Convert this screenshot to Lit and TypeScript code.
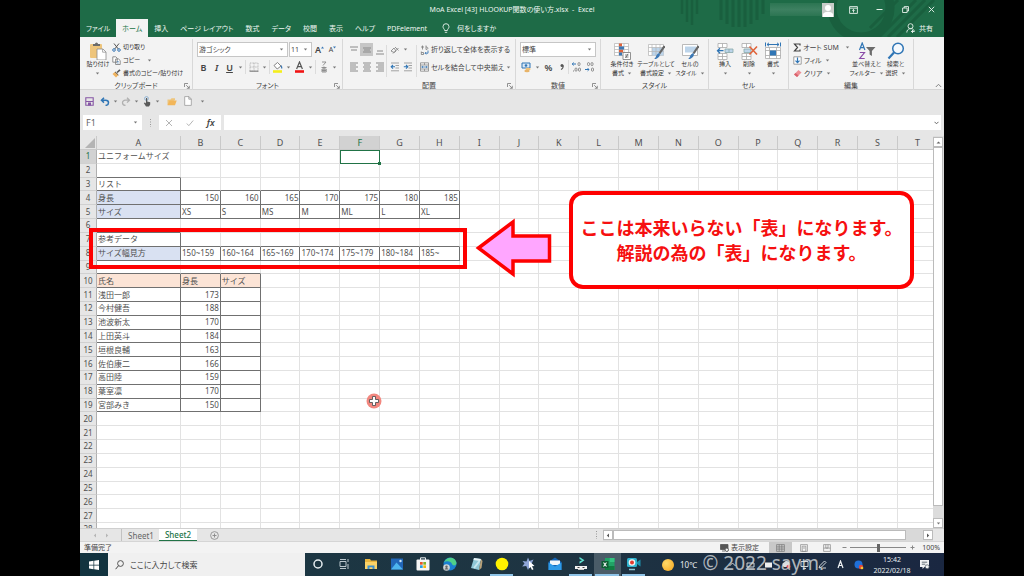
import { LitElement, html, css, svg, nothing } from "lit";
import { customElement, state } from "lit/decorators.js";
import { classMap } from "lit/directives/class-map.js";

const pic = (w: number, h: number, body: unknown) =>
  html`<svg class="pic" width=${w} height=${h} viewBox="0 0 ${w} ${h}" fill="none" aria-hidden="true">${body}</svg>`;

const caret = () => pic(5, 3, svg`<path d="M0.8 0.4 H4.2 L2.5 2.4Z" fill="#777"/>`);

const lines = (rows: number[][]) =>
  pic(10, 10, rows.map(([x, y, w]) => svg`<path d="M${x} ${y}h${w}" stroke="#8a8a8a" stroke-width="1"/>`));

const I = {
  paste: pic(18, 18, svg`<rect x="1" y="2" width="12" height="14" rx="1" fill="#eec57c"/><path d="M4 4V2h2a1.5 1.5 0 0 1 3 0h2v2z" fill="#6b6b6b"/><path d="M8 7h6l3 3v8H8z" fill="#fff" stroke="#8a8a8a" stroke-width=".8"/><path d="M13.6 7v3.2H17" stroke="#8a8a8a" stroke-width=".7"/>`),
  cut: pic(9, 9, svg`<path d="M2 .5 6.3 6M7 .5 2.7 6" stroke="#555" stroke-width="1"/><circle cx="2" cy="7" r="1.3" stroke="#3b78b5"/><circle cx="7" cy="7" r="1.3" stroke="#3b78b5"/>`),
  copy: pic(9, 9, svg`<path d="M.8.8h3l1.400 1.400v4H.8zM3.600 3h3L8.200 4.500v4H3.600z" fill="#fff" stroke="#777" stroke-width=".8"/><path d="M4.800 5.500h2M4.800 7h2" stroke="#3b78b5" stroke-width=".6"/>`),
  brush: pic(9, 9, svg`<path d="M5 3.500 8 .8" stroke="#555" stroke-width="1.600"/><path d="M3 2.800 6.400 6 4 8.500.500 5z" fill="#efb35f"/><path d="m3 2.800 3.400 3.200" stroke="#555" stroke-width="1"/>`),
  launch: pic(6, 6, svg`<path d="M.5 4V.5H4M2.200 2.200l3 3M5.300 2.800v2.500H2.800" stroke="#777" stroke-width=".8"/>`),
  border: pic(10, 10, svg`<path d="M1 1h8v8H1zM5 1v8M1 5h8" stroke="#aaa" stroke-width=".8" stroke-dasharray="1 .6"/><path d="M.5 9.200h9" stroke="#777"/>`),
  fill: pic(11, 12, svg`<path d="m2 4.500 3.500-3L9 5 5.200 8z" fill="#fff" stroke="#777" stroke-width=".9"/><path d="M9 4.500c1 1.500 1 2 .6 3" stroke="#3b78b5" stroke-width="1.300"/><path d="M1 10.500h9" stroke="#f4ee1c" stroke-width="2.600"/>`),
  fontc: pic(11, 12, svg`<path d="m2.600 8 2.900-7 2.900 7M3.600 5.700h3.800" stroke="#555" stroke-width="1.200"/><path d="M1 10.500h9" stroke="#f01414" stroke-width="2.600"/>`),
  phon: pic(8, 12, svg`<path d="M2 1h4L3 4.500M1.500 6.500h5M4 5.500V11M2 8h4.200v3H2zM2 9.500h4" stroke="#888" stroke-width=".9"/>`),
  top: lines([[1, 2, 8], [2, 5, 6]]),
  mid: lines([[1, 3, 8], [2, 5, 6], [1, 7, 8]]),
  bot: lines([[2, 6, 6], [1, 9, 8]]),
  left: lines([[1, 1, 8], [1, 3, 6], [1, 5, 8], [1, 7, 6], [1, 9, 8]]),
  cen: lines([[1, 1, 8], [2, 3, 6], [1, 5, 8], [2, 7, 6], [1, 9, 8]]),
  right: lines([[1, 1, 8], [3, 3, 6], [1, 5, 8], [3, 7, 6], [1, 9, 8]]),
  orient: pic(10, 10, svg`<path d="m1 6 3-3 2 3-2 1.500zM5 2l3.500 3.500M3 8.500 8.500 3" stroke="#888" stroke-width=".9"/>`),
  outd: pic(10, 10, svg`<path d="M1 1h8M5.500 3.500H9M5.500 6H9M1 8.800h8" stroke="#999" stroke-width=".9"/><path d="M5 4.800H1.200M3 3 1.200 4.800 3 6.600" stroke="#2f75b5" stroke-width="1.100"/>`),
  ind: pic(10, 10, svg`<path d="M1 1h8M5.500 3.500H9M5.500 6H9M1 8.800h8" stroke="#999" stroke-width=".9"/><path d="M.8 4.800h3.800M3 3l1.800 1.800L3 6.600" stroke="#2f75b5" stroke-width="1.100"/>`),
  wrap: pic(9, 10, svg`<path d="M1 2h3M2.500.5v4M6 .5v4c2.500 0 2.500-2.600 0-2.500M1.300 6.500v3h2.200v-2H1.400" stroke="#777" stroke-width=".8"/><path d="M8 5.500v2.700H5M6.200 7 5 8.200l1.200 1.200" stroke="#3b78b5" stroke-width=".9"/>`),
  merge: pic(9, 10, svg`<path d="M.5.8h8v8.400h-8zM.5 3h8M.5 7h8M4.500.8V3M4.500 7v2" stroke="#888" stroke-width=".8"/><path d="M1.500 5h6M3 4 1.800 5 3 6M6 4l1.200 1L6 6" stroke="#3b78b5" stroke-width=".8"/>`),
  money: pic(11, 11, svg`<path d="M1 1h8v5H1z" fill="#dbe8f5" stroke="#2f75b5"/><circle cx="5" cy="3.500" r="1.300" fill="#2f75b5"/><ellipse cx="7" cy="7" rx="2.700" ry="1.300" fill="#f0c27a"/><ellipse cx="6" cy="9" rx="2.700" ry="1.300" fill="#e8b469"/>`),
  comma: pic(8, 10, svg`<circle cx="4" cy="3.500" r="1.500" fill="#555"/><path d="M5.200 3.500C5.300 5.500 4.500 6.800 3 7.500" stroke="#555" stroke-width="1.100"/>`),
  decUp: pic(11, 10, svg`<path d="M5 2H1.200M2.700.6 1.200 2l1.500 1.400" stroke="#2f75b5"/><rect x="7" y=".6" width="2" height="3" rx="1" stroke="#777" stroke-width=".8"/><rect x="4" y="6" width="2" height="3.200" rx="1" stroke="#777" stroke-width=".8"/><rect x="7.500" y="6" width="2" height="3.200" rx="1" stroke="#777" stroke-width=".8"/><path d="M2 9h.9" stroke="#777"/>`),
  decDn: pic(11, 10, svg`<rect x="3.500" y=".6" width="2" height="3" rx="1" stroke="#777" stroke-width=".8"/><rect x="7" y=".6" width="2" height="3" rx="1" stroke="#777" stroke-width=".8"/><path d="M1 7.500h4M3.600 6.100 5 7.500 3.600 8.900" stroke="#2f75b5"/><rect x="7.500" y="6" width="2" height="3.200" rx="1" stroke="#777" stroke-width=".8"/>`),
  cond: pic(18, 18, svg`<path d="M1.500 1.500h14v12h-14zM6 1.500v12M11 1.500v12M1.500 4.500h14M1.500 7.500h14M1.500 10.500h14" fill="#fff" stroke="#bbb" stroke-width=".8"/><path d="M6 1.500h3v3H6zM6 7.500h4v3H6z" fill="#e0633a"/><path d="M6 4.500h5v3H6zM6 10.500h3v3H6z" fill="#3b78b5"/><path d="M10 10.500h7.500v7H10z" fill="#fff" stroke="#777" stroke-width=".8"/><path d="M12 13h3.500M12 15h3.500M15 11.800 12.600 16" stroke="#555" stroke-width=".7"/>`),
  tbl: pic(18, 18, svg`<path d="M1.500 2.500h15v11h-15z" fill="#fff" stroke="#bbb" stroke-width=".8"/><path d="M5 5.500h11.500v8H5z" fill="#bcd4ea"/><path d="M5 2.500v11M9 2.500v11M13 2.500v11M1.500 5.500h15M1.500 9.500h15" stroke="#b5b5b5" stroke-width=".7"/><path d="m17.500 4-5 7.500" stroke="#666" stroke-width="2.200"/><path d="M12.500 11c1.500 3-2 6.500-5.500 6 2.500-1 1.500-5 5.500-6z" fill="#3b78b5"/>`),
  cellst: pic(18, 18, svg`<path d="M1.500 2.500h15v11h-15z" fill="#fff" stroke="#aaa" stroke-width=".8"/><path d="M4 4.500h11v6H4z" fill="#bcd4ea"/><path d="m17.500 4-5 7.500" stroke="#666" stroke-width="2.200"/><path d="M12.500 11c1.500 3-2 6.500-5.500 6 2.500-1 1.500-5 5.500-6z" fill="#3b78b5"/>`),
  ins: pic(18, 18, svg`<path d="M2 1.500h9v4H2zM6.500 1.500v4M2 11.500h9v6H2zM6.500 11.500v6M2 14.500h9" fill="#fff" stroke="#aaa" stroke-width=".8"/><path d="M9 7h8v3.500H9zM13 7v3.500" fill="#bcd4ea" stroke="#8aa" stroke-width=".8"/><path d="M7.500 8.700h-6M4 6.200 1.500 8.700 4 11.200" stroke="#2f75b5" stroke-width="1.300"/>`),
  del: pic(18, 18, svg`<path d="M2 1.500h9v4H2zM6.500 1.500v4M2 11.500h9v6H2zM6.500 11.500v6M2 14.500h9" fill="#fff" stroke="#aaa" stroke-width=".8"/><path d="M4 7h7v3.500H4z" fill="#bcd4ea" stroke="#8aa" stroke-width=".8"/><path d="m9.500 4.500 7.500 8M17 4.500l-7.500 8" stroke="#e0633a" stroke-width="1.600"/>`),
  fmt: pic(18, 18, svg`<path d="M1.500 5.500h15v11h-15zM5.500 5.500v11M12.500 5.500v11M1.500 8.500h15M1.500 13.500h15" fill="#fff" stroke="#aaa" stroke-width=".8"/><path d="M6 8.500h6v5H6z" fill="#2f75b5"/><path d="M3 2.500h12M5 .8 3 2.500l2 1.700M13 .8l2 1.700-2 1.700M1.500 .5v4M16.500.5v4" stroke="#2f75b5" stroke-width="1"/>`),
  sigma: pic(8, 9, svg`<path d="M7 2.500V1H1.500l3 3.500-3 3.500H7V6.500" stroke="#444" stroke-width="1.200"/>`),
  fillDn: pic(9, 9, svg`<path d="M.8.800h7.400v7.400H.8z" fill="#fff" stroke="#888" stroke-width=".8"/><path d="M4.500 1.500v5M2.500 4.600l2 2 2-2" stroke="#2f75b5" stroke-width="1.200"/>`),
  erase: pic(9, 9, svg`<path d="M5.500 1 8.500 3.500 4 8 1 5.500z" fill="#ee8f96"/><path d="M2.600 4 5.600 6.500 4 8 1 5.500z" fill="#d9626c"/>`),
  sort: pic(18, 18, svg`<path d="m1.500 8 2.700-7 2.700 7M2.400 5.700H6" stroke="#2f75b5" stroke-width="1.200"/><path d="M1.800 10.500h4.700L1.800 16.500h4.900" stroke="#8a4ba8" stroke-width="1.200"/><path d="M8 5h9.500l-3.600 4v5l-2.300-1.500V9z" fill="#6b6b6b"/>`),
  find: pic(18, 18, svg`<circle cx="11" cy="6.500" r="5.300" fill="#f5f9fd" stroke="#2f75b5" stroke-width="1.500"/><path d="m7 10.500-5.500 6" stroke="#2f75b5" stroke-width="2.200"/>`),
  bulb: pic(8, 11, svg`<path d="M2.600 7.500C2.600 6 1 5.500 1 3.700a3 3 0 0 1 6 0C7 5.500 5.400 6 5.400 7.500zM2.800 9.300h2.400" stroke="#e8f2ec" stroke-width=".9"/>`),
  person: pic(9, 10, svg`<circle cx="4.500" cy="3.200" r="2.500" stroke="#e8f2ec" stroke-width=".9"/><path d="M.8 9.500c0-5 7.400-5 7.400-1M6.500 7v3M5 8.500h3.500" stroke="#e8f2ec" stroke-width=".9"/>`),
  save: pic(9, 9, svg`<path d="M.8.800h7.400v7.400H.8z" stroke="#8657a5" stroke-width="1.100"/><path d="M1 4.500h7" stroke="#8657a5"/><path d="M3 5.500h3v3H3z" fill="#8657a5"/>`),
  undo: pic(10, 9, svg`<path d="M1.500 3.200h4c4 0 4 5 0 5.200M4 .8 1.500 3.200 4 5.600" stroke="#2f75b5" stroke-width="1.500"/>`),
  redo: pic(10, 9, svg`<path d="M8.500 3.200h-4c-4 0-4 5 0 5.200M6 .8l2.500 2.400L6 5.600" stroke="#b0b0b0" stroke-width="1.300"/>`),
  hand: pic(8, 11, svg`<circle cx="3.500" cy="2.500" r="1.900" stroke="#7ba7cf" stroke-width=".8"/><path d="M3 2h1.200v3.500l3 .8v2.200L6 10.500H3L.8 7 2 6.500l1 1z" fill="#5a5a5a"/>`),
  folder: pic(10, 9, svg`<path d="M.5 8V2.500h3l1-1.200H8V3" fill="#eec57c"/><path d="M.5 8.200 2.500 3.500h7.200L8 8.200z" fill="#f2b65a"/>`),
  doc: pic(8, 10, svg`<path d="M.7.600h4.300l2.300 2.400v6.400H.7zM4.800.6v2.600h2.500" fill="#fff" stroke="#999" stroke-width=".8"/>`),
};

type Col = { t?: string; fill?: string; num?: boolean };
const COLS = "ABCDEFGHIJKLMNOPQRST".split("");
const HEIGHTS = ["150", "160", "165", "170", "175", "180", "185"];
const SIZES = ["XS", "S", "MS", "M", "ML", "L", "XL"];
const RANGES = ["150~159", "160~164", "165~169", "170~174", "175~179", "180~184", "185~"];
const PEOPLE: [string, string][] = [
  ["浅田一郎", "173"], ["今村健吾", "188"], ["池波新太", "170"], ["上田英斗", "184"], ["垣根良輔", "163"],
  ["佐伯康二", "166"], ["高田陸", "159"], ["葉室凛", "170"], ["宮部みき", "150"],
];

const sheet: Record<string, Col> = {
  A1: { t: "ユニフォームサイズ" }, A3: { t: "リスト" },
  A4: { t: "身長", fill: "blue" }, A5: { t: "サイズ", fill: "blue" },
  A7: { t: "参考データ" }, A8: { t: "サイズ幅見方", fill: "blue" },
  A10: { t: "氏名", fill: "peach" }, B10: { t: "身長", fill: "peach" }, C10: { t: "サイズ", fill: "peach" },
};
HEIGHTS.forEach((h, i) => {
  sheet[COLS[i + 1] + "4"] = { t: h, num: true };
  sheet[COLS[i + 1] + "5"] = { t: SIZES[i] };
  sheet[COLS[i + 1] + "8"] = { t: RANGES[i] };
});
PEOPLE.forEach(([n, h], i) => {
  sheet["A" + (11 + i)] = { t: n };
  sheet["B" + (11 + i)] = { t: h, num: true };
});

const boxed = (c: number, r: number) =>
  (c === 0 && (r === 3 || r === 7)) ||
  (c >= 0 && c <= 7 && (r === 4 || r === 5 || r === 8)) ||
  (c >= 0 && c <= 2 && r >= 10 && r <= 19);

const TABS = ["ファイル", "ホーム", "挿入", "ページ レイアウト", "数式", "データ", "校閲", "表示", "ヘルプ", "PDFelement"];

const TASKS: { name: string; art: unknown; open?: boolean; active?: boolean }[] = [
  { name: "Cortana", art: svg`<circle cx="8" cy="8" r="4" stroke="#e6edf0" stroke-width="1.500"/>` },
  { name: "タスク ビュー", art: svg`<path d="M4 5.500h6v5H4zM4 3.500h6M4 12.500h6M12 3v3M12 8v5" stroke="#b9c6cc" stroke-width="1"/>` },
  { name: "エクスプローラー", art: svg`<path d="M2 3h5l1 1.500h6V13H2z" fill="#e9b43c"/><path d="M2 6h12v7H2z" fill="#fbd267"/><path d="M4.500 13V9.500h7V13h-2v-1.800h-3V13z" fill="#3b8fd0"/>` },
  { name: "フォト", art: svg`<path d="M2 2.500h12v11H2z" fill="#2166b8"/><path d="m2 13.500 5.500-7 6.500 7z" fill="#4db4ee"/><circle cx="11.500" cy="5" r="1.200" fill="#cfe9fa"/>` },
  { name: "Microsoft Store", art: svg`<path d="M5.500 4V1.800h5V4" stroke="#e8eef0"/><rect x="1.500" y="3.500" width="13" height="11" rx="1" fill="#f6f6f6"/><path d="M5 6h2.700v2.700H5z" fill="#e8562a"/><path d="M8.300 6H11v2.700H8.300z" fill="#7fb42d"/><path d="M5 9.300h2.700V12H5z" fill="#28a0e0"/><path d="M8.300 9.300H11V12H8.300z" fill="#f7b80f"/>` },
  { name: "Microsoft Edge", art: svg`<circle cx="8" cy="8" r="6.500" fill="#1b7fd1"/><path d="M2 6.500C4 0 13.500 0 14.500 7c0 3-4 3-4.500 1C9 4.500 4 4.500 2 6.500z" fill="#4fcf8a"/><circle cx="4.500" cy="11.500" r="3.300" fill="#cfd5d8"/><circle cx="4.500" cy="10.700" r="1.200" fill="#666"/><path d="M2.500 13.500c.5-2 3.500-2 4 0z" fill="#666"/>` },
  { name: "メモ帳", art: svg`<path d="m6 2 7 1-2 11-8-2z" fill="#8fc6d6"/><path d="m6 2 7 1-.5 2-7-1z" fill="#e8f4f7"/><path d="M6 12 11.500 5" stroke="#c7e6ee" stroke-width="2"/><path d="m13 3-2 11 2.500-2L14.500 5z" fill="#b8a27a"/>` },
  { name: "録画マーカー", open: true, art: svg`<circle cx="8" cy="8" r="6.300" fill="#fff200"/>` },
  { name: "カーソル", art: svg`<path d="m7 1.500 1.500 3.500 4-1.500-1.800 4 2.300 2-4 .5L7 14l-1.800-4-4 .5 2.300-3L1.500 5l4 .5z" fill="#8fa6d8"/><path d="m8 5 5.500 5-2.500.3 1.500 3-1.500.8-1.500-3L8 12.500z" fill="#fff"/>` },
  { name: "メール", art: svg`<path d="M1.500 6 8 1.500 14.500 6v8h-13z" fill="#1565b5"/><path d="M3 4.500h10V9H3z" fill="#f2f7fb"/><path d="m1.500 6.500 6.500 4 6.500-4V14h-13z" fill="#2f9be8"/>` },
  { name: "Filmora", open: true, art: svg`<path d="m6.500 1 5 3.300-5 3.400V5.500L9 4.300 6.500 3z" fill="#5fe0d0"/><path d="M2 10h12v3H2z" fill="#f3f3f3"/><path d="M5 13.500h6" stroke="#ccc"/><path d="M4.500 11.500h2M9.500 11.500h2" stroke="#444"/>` },
  { name: "Excel", open: true, active: true, art: svg`<path d="M5 2h9.500v12H5z" fill="#21a366"/><path d="M9.700 2h4.800v4H9.700z" fill="#33c481"/><path d="M5 10h9.500v4H5z" fill="#107c41"/><path d="M1.500 5h7v7h-7z" fill="#0e5c33"/><path d="m3.500 6.500 3 4M6.500 6.500l-3 4" stroke="#fff" stroke-width="1.100"/>` },
  { name: "レコーダー", open: true, art: svg`<rect x="1" y="2" width="10" height="9" rx="1.500" fill="#2eb3cf"/><path d="m11 6 3.500-2.500v7L11 8z" fill="#1f8fab"/><circle cx="6" cy="6.500" r="3.300" fill="#f5f5f5"/><circle cx="6" cy="6.500" r="2" fill="#e43b2f"/><path d="M3 13.500h6" stroke="#8fc6d6" stroke-width="1.500"/>` },
];

@customElement("app-root")
export class AppRoot extends LitElement {
  @state() private tab = "ホーム";

  static styles = css`
    :host { display: flex; flex-direction: column; height: 100vh; min-height: 400px; overflow: hidden; box-sizing: border-box; padding: 0 80px; background: #000;
      font: 7px/9px "Noto Sans", "Noto Sans CJK JP", sans-serif; color: #444; }
    * { box-sizing: border-box; }
    button, input, select { font: inherit; color: inherit; background: none; border: 0; padding: 0; margin: 0; border-radius: 0; appearance: none; outline: 0; }
    button { display: flex; align-items: center; justify-content: center; white-space: nowrap; }
    .pic { display: block; flex: none; }
    .top, .ribbon, .status, .task { font-feature-settings: "palt"; }

    .top { position: relative; background: #1e6b47; color: #eef6f1; }
    .deco { position: absolute; right: 0; top: 0; }
    .title { position: relative; display: grid; grid-template-columns: 1fr auto 1fr; height: 19px; align-items: center; }
    .title h1 { margin: 0; font: inherit; white-space: pre; }
    .win { display: flex; justify-content: flex-end; align-items: center; }
    .win button { width: 26px; height: 18px; }
    .account { display: flex; align-items: center; margin-right: 6px; }
    .account i { width: 52px; height: 13px; background: linear-gradient(#2c7552, #3d8061, #2c7552); }
    .tabs { position: relative; display: flex; height: 18px; align-items: stretch; }
    .tabs button { padding: 0 6px; }
    .tabs button.on { background: #f3f3f3; color: #217346; }
    .tabs .tell { gap: 7px; padding: 0 9px; }
    .tabs .share { margin-left: auto; gap: 4px; padding: 0 11px; }

    .ribbon { display: grid; grid-template-columns: 113fr 150fr 173fr 85fr 108fr 80fr 125fr 30fr; height: 53px; background: #f3f3f3; border-bottom: 1px solid #d5d5d5; }
    .group { display: grid; grid-template-rows: 41px 11px; min-width: 0; border-right: 1px solid #d8d8d8; margin: 2px 0 1px; }
    .group.end { border: 0; }
    .body { display: flex; min-width: 0; padding: 2px 0 0 4px; }
    .caption { display: grid; grid-template-columns: 1fr auto 1fr; align-items: center; white-space: nowrap; }
    .caption button { grid-column: 3; justify-self: end; margin-right: 2px; }
    .caption span { grid-column: 2; }
    .big { display: grid; justify-items: center; align-content: start; grid-template-rows: 19px; width: 24px; flex: none; color: #333; font-size: 6px; }
    .big.wide { width: 34px; }
    .big.paste { width: 28px; }
    .big .cap { display: flex; align-items: center; height: 9px; gap: 3px; }
    .three { display: grid; grid-template-rows: repeat(3, 13px); justify-items: start; }
    .three.small { font-size: 6px; color: #333; }
    .three button, .text { gap: 2px; }
    .two { display: grid; grid-template-rows: 17px 18px; align-items: center; }
    .row { display: flex; align-items: center; }
    .b { width: 13px; height: 13px; }
    .b.on { background: #c6c6c6; }
    .c { width: 9px; height: 13px; }
    .sep { width: 1px; height: 14px; margin-right: 1px; background: #dcdcdc; }
    .sep.tall { height: 32px; align-self: center; }
    .sep.spaced { margin: 0 3px 0 2px; }
    .ch { font-size: 9px; font-weight: 600; }
    .it { font-style: italic; }
    .un { text-decoration: underline; }
    .pick { display: grid; align-items: center; height: 15px; background: #fff; border: 1px solid #c6c6c6; margin-right: 1px; }
    .pick select, .pick .pic { grid-area: 1 / 1; }
    .pick select { width: 100%; padding: 0 1px; }
    .pick .pic { justify-self: end; margin-right: 3px; pointer-events: none; }
    .w91 { width: 91px; } .w23 { width: 23px; } .w76 { width: 76px; }

    .qat { display: flex; align-items: center; height: 22px; padding: 0 3px; background: #e6e6e6; }
    .qat .b { width: 12px; }
    .qat .part { display: flex; margin-right: 4px; }
    .formula { display: flex; height: 24px; padding: 3px 3px 6px; background: #e6e6e6; }
    .name { display: flex; align-items: center; width: 59px; background: #fff; }
    .name input { width: 48px; padding: 0 3px; font-size: 9px; color: #666; }
    .dots { width: 17px; display: grid; place-items: center; }
    .fx { display: flex; align-items: center; justify-content: space-around; width: 62px; background: #fff; margin-right: 3px; }
    .fxin { display: flex; align-items: center; flex: 1; background: #fff; padding-right: 2px; }
    .fxin input { flex: 1; min-width: 0; }

    .work { position: relative; display: grid; grid-template-columns: minmax(0, 1fr) 11px; flex: 1; min-height: 0; overflow: hidden; background: #e6e6e6; }
    .view { overflow: hidden; min-height: 0; background: #fff; }
    table { border-collapse: separate; border-spacing: 0; table-layout: fixed; width: calc(100% + 5px); height: 401px; font-size: 8px; line-height: 10px; color: #505050; }
    th, td { padding: 0 1px; overflow: hidden; white-space: nowrap; border: 0 solid #e2e2e2; border-width: 0 1px 1px 0; font-weight: 400; text-align: left; }
    thead tr { height: 14px; }
    thead th { text-align: center; font-size: 9px; background: #e6e6e6; border-color: #c9c9c9; }
    tbody th { text-align: center; padding: 0; background: #e6e6e6; border-color: #d0d0d0; border-right-color: #b0b0b0; }
    thead th.sel, tbody th.sel { background: #d2d2d2; color: #217346; }
    .hcol { width: 17px; } .acol { width: 84px; }
    .corner { padding: 0; }
    .corner svg { margin-left: auto; }
    .num { text-align: right; }
    .dr { border-right-color: #707070; }
    .db { border-bottom-color: #707070; }
    .blue { background: #d9e1f2; }
    .peach { background: #fce4d6; }
    .cur { position: relative; overflow: visible; outline: 1px solid #217346; outline-offset: -1px; }
    .cur::after { content: ""; position: absolute; right: -2px; bottom: -2px; width: 3px; height: 3px; background: #217346; }
    .vbar { display: flex; flex-direction: column; padding: 1px 1px 0 0; background: #dcdcdc; }
    .vbar button, .hbar button { width: 10px; height: 10px; background: #fff; border: 1px solid #bbb; flex: none; }
    .vthumb { height: 359px; background: #fff; border: 1px solid #bbb; }
    .vbar button:last-child { margin-top: auto; }

    .frame { position: absolute; left: 9px; top: 92px; width: 378px; height: 41px; border: 4px solid #fe0000; }
    .arrow { position: absolute; left: 395px; top: 82px; }
    .note { position: absolute; left: 489px; top: 55px; width: 345px; height: 98px; display: grid; place-content: center; text-align: center; border: 4px solid #fe0000; border-radius: 14px; background: #fff; color: #f61010; font: 700 18px/25px "Noto Sans CJK JP", sans-serif; white-space: nowrap; }
    .note p { margin: 0; }
    .pointer { position: absolute; left: 286px; top: 257px; }

    .sheets { display: flex; align-items: stretch; height: 13px; background: #e6e6e6; border-top: 1px solid #cfcfcf; font-size: 8px; color: #666; }
    .nav { width: 42px; display: flex; align-items: center; justify-content: center; gap: 8px; border-right: 1px solid #c2c2c2; margin-right: 1px; }
    .sheets .s { padding: 0 5px; width: 36px; }
    .sheets .s.on { width: 38px; background: #fff; color: #217346; font-weight: 500; border-bottom: 1px solid #217346; }
    .sheets .add { width: 34px; }
    .hbar { display: flex; align-items: center; width: 330px; margin: 0 11px 0 5px; background: #d9d9d9; }
    .grip { margin-left: auto; display: grid; place-items: center; }
    .hthumb { height: 10px; flex: 1; background: #fff; border: 1px solid #bbb; }
    .hgap { width: 17px; }

    .status { display: flex; align-items: center; height: 12px; padding: 0 4px; background: #f3f3f3; border-top: 1px solid #d5d5d5; }
    .status .end { margin-left: auto; display: flex; align-items: center; height: 100%; }
    .v { width: 23px; height: 11px; }
    .v.on { background: #c8c8c8; }
    .setting { gap: 2px; margin-right: 10px; }
    .zm { width: 12px; }
    .zoom { width: 56px; height: 9px; background: linear-gradient(#888, #888) center / 100% 1px no-repeat; }
    .zoom::-webkit-slider-thumb { appearance: none; width: 3px; height: 8px; background: #666; }
    .pct { width: 22px; text-align: right; }

    .task { position: relative; display: flex; height: 23px; background: linear-gradient(90deg, #1a3843, #1e3442 55%, #1a2741); color: #e8edf0; }
    .start { width: 28px; background: #12333f; }
    .search { display: flex; align-items: center; gap: 6px; width: 197px; padding-left: 7px; background: #f0f0f0; color: #444; }
    .search input { flex: 1; min-width: 0; font-size: 8px; }
    .search input::placeholder { color: #444; opacity: 1; }
    .apps { display: grid; grid-template-columns: repeat(13, 1fr); width: 342px; }
    .app { border-bottom: 2px solid transparent; background-clip: padding-box; }
    .app.open { border-image: linear-gradient(90deg, transparent 3px, #8fc4e8 3px, #8fc4e8 23px, transparent 23px) 2; border-style: solid; border-width: 0 0 2px; }
    .app.active { background: #4a5c68; }
    .sun { width: 12px; height: 12px; border-radius: 50%; background: radial-gradient(circle at 35% 35%, #ffd968, #f6a51e); margin: 0 6px 0 15px; align-self: center; }
    .temp { align-self: center; font-size: 8px; }
    .tray { margin-left: auto; display: flex; align-items: center; }
    .tray > .pic { margin-right: 9px; }
    .clock { width: 38px; text-align: center; line-height: 11px; white-space: pre-line; }
    .action { width: 27px; height: 23px; margin-right: 6px; }
    .mark { position: absolute; right: 120px; bottom: 0; font: 19px/26px "Noto Sans", sans-serif; color: rgba(225, 228, 230, .75); white-space: nowrap; }
  `;

  private btn(name: string, icon: unknown, cls = "b") {
    return html`<button class=${cls} aria-label=${name}>${icon}</button>`;
  }

  private drop(name: string) {
    return html`<button class="c" aria-label=${name}>${caret()}</button>`;
  }

  private big(icon: unknown, l1: string, l2 = "", cls = "") {
    return html`<button class="big ${cls}">${icon}<span class="cap">${l1}</span><span class="cap">${l2}${caret()}</span></button>`;
  }

  private group(caption: string, body: unknown, launcher = false) {
    return html`<section class="group">
      <div class="body">${body}</div>
      <div class="caption"><span>${caption}</span>${launcher ? this.btn(caption + "の設定", I.launch, "") : nothing}</div>
    </section>`;
  }

  private renderTop() {
    return html`<header class="top">
      <svg class="deco" width="270" height="37" viewBox="0 0 270 37" fill="none" stroke="#195f3e" aria-hidden="true">
        <path d="M8 0v14M13 0v22M18 0v25M23 0v14" stroke-width="2.500"/>
        <path d="M47 0v20M53 0v24M59 0v27M65 0v27M71 0v27M77 0v24M83 0v20M89 0v14" stroke-width="3"/>
        <circle cx="187" cy="8" r="29" stroke-width="9"/>
        <path d="m205 37 37-37M214 37l37-37M223 37l37-37M196 28l28-28" stroke-width="3"/>
      </svg>
      <div class="title">
        <span></span>
        <h1>MoA Excel [43] HLOOKUP関数の使い方.xlsx  -  Excel</h1>
        <div class="win">
          <span class="account"><i></i>${pic(12, 14, svg`<path d="M0 0h12v14H0z" fill="#c9cdca"/><circle cx="6" cy="5" r="3" fill="#fff"/><path d="M1 14V11c2-3 8-3 10 0v3z" fill="#fff"/>`)}</span>
          ${this.btn("リボンの表示オプション", pic(9, 8, svg`<path d="M.6.600h7.800v6.800H.6zM.6 2.200h7.800M4.500 6.500v-3M3.200 4.700l1.300-1.300 1.300 1.300" stroke="#e8f2ec" stroke-width=".9"/>`))}
          ${this.btn("最小化", pic(7, 7, svg`<path d="M.5 3.500h6" stroke="#e8f2ec"/>`))}
          ${this.btn("元に戻す", pic(7, 7, svg`<path d="M.6 2h4.500v4.500H.6zM2.200 2V.6h4.300V5H5" stroke="#e8f2ec" stroke-width=".9"/>`))}
          ${this.btn("閉じる", pic(7, 7, svg`<path d="m.8.800 5.400 5.400M6.200.8.8 6.200" stroke="#e8f2ec" stroke-width=".9"/>`))}
        </div>
      </div>
      <nav class="tabs">
        ${TABS.map((t) => html`<button class=${classMap({ on: t === this.tab })} @click=${() => (this.tab = t)}>${t}</button>`)}
        <button class="tell">${I.bulb}何をしますか</button>
        <button class="share">${I.person}共有</button>
      </nav>
    </header>`;
  }

  private renderRibbon() {
    return html`<div class="ribbon">
      ${this.group("クリップボード", html`
        ${this.big(I.paste, "貼り付け", "", "paste")}
        <div class="three small">
          <button>${I.cut}切り取り</button>
          <button>${I.copy}コピー&nbsp;&nbsp;&nbsp;${caret()}</button>
          <button>${I.brush}書式のコピー/貼り付け</button>
        </div>`, true)}
      ${this.group("フォント", html`<div class="two">
        <div class="row">
          <label class="pick w91"><select aria-label="フォント名"><option>游ゴシック</option></select>${caret()}</label>
          <label class="pick w23"><select aria-label="サイズ"><option>11</option></select>${caret()}</label>
          <button class="b ch" aria-label="拡大">A${pic(3, 8, svg`<path d="m0 2.500 1.500-2 1.500 2z" fill="#3b78b5"/>`)}</button>
          <button class="b" aria-label="縮小">A${pic(3, 8, svg`<path d="m0 .5 1.500 2 1.500-2z" fill="#3b78b5"/>`)}</button>
        </div>
        <div class="row">
          <button class="b ch">B</button><button class="b ch it">I</button><button class="b ch un">U</button>${this.drop("下線")}
          <i class="sep"></i>${this.btn("罫線", I.border)}${this.drop("罫線の種類")}
          <i class="sep"></i>${this.btn("塗りつぶし", I.fill)}${this.drop("塗りの色")}${this.btn("文字色", I.fontc)}${this.drop("文字の色")}
          <i class="sep"></i>${this.btn("ふりがな", I.phon)}${this.drop("ふりがなの設定")}
        </div>
      </div>`, true)}
      ${this.group("配置", html`
        <div class="two">
          <div class="row">${this.btn("上揃え", I.top)}${this.btn("上下中央", I.mid, "b on")}${this.btn("下揃え", I.bot)}</div>
          <div class="row">${this.btn("左揃え", I.left)}${this.btn("中央揃え", I.cen)}${this.btn("右揃え", I.right)}</div>
        </div>
        <i class="sep tall"></i>
        <div class="two">
          <div class="row">${this.btn("方向", I.orient)}${this.drop("方向の種類")}</div>
          <div class="row">${this.btn("インデントを減らす", I.outd)}${this.btn("インデントを増やす", I.ind)}</div>
        </div>
        <i class="sep tall spaced"></i>
        <div class="two">
          <div class="row"><button class="text">${I.wrap}折り返して全体を表示する</button></div>
          <div class="row"><button class="text">${I.merge}セルを結合して中央揃え</button>${this.drop("結合の種類")}</div>
        </div>`, true)}
      ${this.group("数値", html`<div class="two">
        <label class="pick w76"><select aria-label="表示形式"><option>標準</option></select>${caret()}</label>
        <div class="row">${this.btn("通貨", I.money)}${this.drop("通貨の種類")}<button class="b ch">%</button>${this.btn("桁区切り", I.comma)}
          <i class="sep"></i>${this.btn("小数点以下を増やす", I.decUp)}${this.btn("小数点以下を減らす", I.decDn)}</div>
      </div>`, true)}
      ${this.group("スタイル", html`
        ${this.big(I.cond, "条件付き", "書式", "wide")}
        ${this.big(I.tbl, "テーブルとして", "書式設定", "wide")}
        ${this.big(I.cellst, "セルの", "スタイル", "wide")}`)}
      ${this.group("セル", html`${this.big(I.ins, "挿入")}${this.big(I.del, "削除")}${this.big(I.fmt, "書式")}`)}
      ${this.group("編集", html`
        <div class="three">
          <button>${I.sigma}オート SUM&nbsp;&nbsp;${caret()}</button>
          <button>${I.fillDn}フィル&nbsp;${caret()}</button>
          <button>${I.erase}クリア&nbsp;${caret()}</button>
        </div>
        ${this.big(I.sort, "並べ替えと", "フィルター", "wide")}
        ${this.big(I.find, "検索と", "選択")}`)}
      <section class="group end"><div></div><div class="caption">${this.btn("リボンを折りたたむ", pic(7, 5, svg`<path d="m.8 4 2.700-2.700L6.200 4" stroke="#777" stroke-width=".9"/>`), "")}</div></section>
    </div>`;
  }

  private cell(c: number, r: number) {
    const d = sheet[COLS[c] + r] ?? {};
    const self = boxed(c, r);
    return html`<td class=${classMap({
      num: !!d.num, dr: self || boxed(c + 1, r), db: self || boxed(c, r + 1),
      blue: d.fill === "blue", peach: d.fill === "peach", cur: c === 5 && r === 1,
    })}>${d.t ?? nothing}</td>`;
  }

  private renderSheet() {
    return html`<main class="work">
      <div class="view">
        <table>
          <colgroup><col class="hcol"><col class="acol">${COLS.slice(1).map(() => html`<col>`)}</colgroup>
          <thead><tr><th class="corner">${pic(12, 12, svg`<path d="M11 1v10H1z" fill="#b4b4b4"/>`)}</th>
            ${COLS.map((c) => html`<th class=${classMap({ sel: c === "F" })}>${c}</th>`)}</tr></thead>
          <tbody>${Array.from({ length: 28 }, (_, i) => i + 1).map((r) => html`<tr>
            <th class=${classMap({ sel: r === 1 })}>${r}</th>${COLS.map((_, c) => this.cell(c, r))}</tr>`)}</tbody>
        </table>
      </div>
      <div class="vbar">
        ${this.btn("上へ", pic(5, 3, svg`<path d="M.5 2.600 2.500.4l2 2.200z" fill="#666"/>`), "")}
        <div class="vthumb"></div>
        ${this.btn("下へ", caret(), "")}
      </div>
      <div class="frame"></div>
      <svg class="arrow" width="78" height="60" viewBox="0 0 78 60" aria-hidden="true"><path d="M3.500 30 38 4v14h36.500v25H38v13z" fill="#ffa6ff" stroke="#fe0000" stroke-width="3.500"/></svg>
      <div class="note"><p>ここは本来いらない「表」になります。</p><p>解説の為の「表」になります。</p></div>
      <svg class="pointer" width="16" height="16" viewBox="0 0 16 16" aria-hidden="true"><circle cx="8" cy="8" r="7.500" fill="#f2877f"/><path d="M6.500 3.500h3v3h3v3h-3v3h-3v-3h-3v-3h3z" fill="#fff" stroke="#555" stroke-width=".9"/></svg>
    </main>`;
  }

  private renderBottom() {
    return html`
      <div class="sheets">
        <div class="nav">${pic(4, 5, svg`<path d="M3 .5v4L.8 2.500z" fill="#b5b5b5"/>`)}${pic(4, 5, svg`<path d="M1 .5v4l2.200-2z" fill="#b5b5b5"/>`)}</div>
        <button class="s">Sheet1</button><button class="s on">Sheet2</button>
        ${this.btn("新しいシート", pic(9, 9, svg`<circle cx="4.500" cy="4.500" r="3.900" stroke="#888" stroke-width=".8"/><path d="M4.500 2.500v4M2.500 4.500h4" stroke="#888" stroke-width=".9"/>`), "add")}
        <span class="grip">${pic(3, 8, svg`<path d="M1.500 0v8" stroke="#999" stroke-dasharray="1 1.500"/>`)}</span>
        <div class="hbar">
          ${this.btn("左へ", pic(4, 5, svg`<path d="M3 .5v4L.8 2.500z" fill="#555"/>`), "")}
          <div class="hthumb"></div><div class="hgap"></div>
          ${this.btn("右へ", pic(4, 5, svg`<path d="M1 .5v4l2.200-2z" fill="#555"/>`), "")}
        </div>
      </div>
      <div class="status">
        <span>準備完了</span>
        <div class="end">
          <button class="setting">${pic(9, 8, svg`<path d="M.5.500h7.500v5H.5zM2 7h3" fill="#555" stroke="#555" stroke-width=".8"/><circle cx="6.800" cy="5.800" r="1.700" fill="#f3f3f3" stroke="#555" stroke-width=".9"/>`)}表示設定</button>
          ${this.btn("標準", pic(9, 8, svg`<path d="M.6.600h7.800v6.800H.6zM3.200.6v6.800M5.800.6v6.800M.6 2.900h7.800M.6 5.100h7.800" stroke="#777" stroke-width=".7"/>`), "v on")}
          ${this.btn("ページ レイアウト表示", pic(8, 8, svg`<path d="M.6.600h6.800v6.800H.6zM2.200 2.200h3.600v5.200H2.200zM3 4h2" stroke="#888" stroke-width=".7"/>`), "v")}
          ${this.btn("改ページ プレビュー", pic(8, 8, svg`<path d="M.6.600h6.800v6.800H.6zM2.800.6v3.500h2.200V.6M.6 4.100h6.800" stroke="#888" stroke-width=".7"/>`), "v")}
          ${this.btn("縮小表示", pic(5, 5, svg`<path d="M.5 2.500h4" stroke="#888"/>`), "zm")}
          <input class="zoom" type="range" min="0" max="200" value="100" aria-label="ズーム">
          ${this.btn("拡大表示", pic(5, 5, svg`<path d="M.5 2.500h4M2.500.5v4" stroke="#888"/>`), "zm")}
          <span class="pct">100%</span>
        </div>
      </div>
      <footer class="task">
        ${this.btn("スタート", pic(10, 10, svg`<path d="M0 1.500 4.500.8v3.900H0zM5.200.7 10 0v4.700H5.200zM0 5.400h4.500v3.900L0 8.600zM5.200 5.400H10V10l-4.800-.7z" fill="#fff"/>`), "start")}
        <label class="search">${pic(9, 10, svg`<circle cx="5.500" cy="3.500" r="2.900" stroke="#444" stroke-width=".9"/><path d="M3.500 5.700.6 9.200" stroke="#444" stroke-width="1"/>`)}<input placeholder="ここに入力して検索" aria-label="検索"></label>
        <div class="apps">${TASKS.map((t) => this.btn(t.name, pic(16, 16, t.art), `app${t.open ? " open" : ""}${t.active ? " active" : ""}`))}</div>
        <span class="sun"></span><span class="temp">10℃</span>
        <div class="tray">
          ${pic(9, 9, svg`<path d="m1.500 6 3-3 3 3" stroke="#cfd6da"/>`)}
          ${pic(9, 9, svg`<path d="M1 3h7v4H1z" stroke="#cfd6da"/>`)}
          ${pic(9, 9, svg`<path d="M1 2.500h7v5H1z" fill="#eee"/>`)}
          ${pic(9, 9, svg`<path d="M1 6a2 2 0 0 1 1-3.500 3 3 0 0 1 5.500 1V7H2z" fill="#d8dde0"/><circle cx="6.500" cy="6.500" r="2" fill="#e2483d"/>`)}
          ${pic(9, 9, svg`<path d="M1 1.500h7v5H1zM3 8.500h3" stroke="#cfd6da"/>`)}
          ${pic(9, 9, svg`<path d="m1 8 1-2.500L6.500 1 8 2.500 3.500 7zM5 8h3" stroke="#cfd6da"/>`)}
          ${pic(9, 9, svg`<path d="m2 8 2.500-7L7 8M3 5.500h3" stroke="#eef1f3" stroke-width="1.200"/>`)}
          ${pic(10, 10, svg`<circle cx="4.500" cy="4.500" r="4" fill="#1f6fd8"/><circle cx="7" cy="7" r="2.200" fill="#e2483d"/><circle cx="8" cy="8" r="1.300" fill="#f7c52e"/>`)}
          <time class="clock">15:42\n2022/02/18</time>
          ${this.btn("通知", pic(11, 11, svg`<path d="M1 1h9v7H5.500L3.500 10V8H1z" fill="#f2f4f5"/><path d="M2.800 3.200h5.400M2.800 5.200h3.500" stroke="#44505a" stroke-width=".8"/><circle cx="8.200" cy="7.800" r="2" fill="#f2f4f5" stroke="#44505a" stroke-width=".7"/>`), "action")}
        </div>
        <span class="mark">© 2022 saym.</span>
      </footer>`;
  }

  render() {
    return html`
      ${this.renderTop()}
      ${this.renderRibbon()}
      <div class="qat">
        <span class="part">${this.btn("保存", I.save)}</span>
        <span class="part">${this.btn("元に戻す", I.undo)}${this.drop("元に戻す履歴")}${this.btn("やり直し", I.redo)}${this.drop("やり直し履歴")}${this.btn("タッチ", I.hand)}${this.drop("タッチ モード")}</span>
        <span class="part">${this.btn("開く", I.folder)}</span>
        <span class="part">${this.btn("新規", I.doc)}</span>
        <span class="part">${this.drop("カスタマイズ")}</span>
      </div>
      <div class="formula">
        <label class="name"><input value="F1" aria-label="名前ボックス">${this.drop("名前の一覧")}</label>
        <span class="dots">${pic(3, 8, svg`<path d="M1.500 0v8" stroke="#999" stroke-dasharray="1 1.500"/>`)}</span>
        <div class="fx">
          ${this.btn("キャンセル", pic(8, 8, svg`<path d="m1 1 6 6M7 1 1 7" stroke="#b5b5b5"/>`))}
          ${this.btn("入力", pic(8, 8, svg`<path d="m.8 4.500 2 2.200L7.200 1.500" stroke="#b5b5b5"/>`))}
          <button class="b ch it">fx</button>
        </div>
        <label class="fxin"><input aria-label="数式バー">${pic(5, 4, svg`<path d="m.5.800 2 2 2-2" stroke="#666"/>`)}</label>
      </div>
      ${this.renderSheet()}
      ${this.renderBottom()}
    `;
  }
}
